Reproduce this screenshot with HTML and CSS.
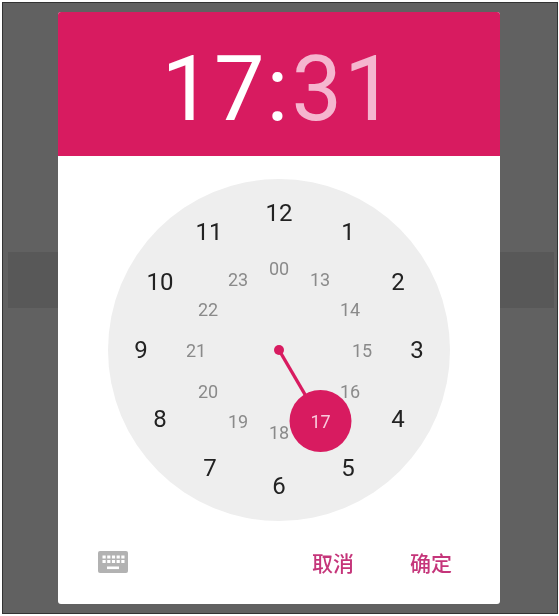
FILE: index.html
```html
<!DOCTYPE html>
<html lang="zh">
<head>
<meta charset="utf-8">
<title>Time picker</title>
<link rel="stylesheet" href="styles.css">
</head>
<body>
<div class="screen">
  <div class="band"></div>
  <div class="dialog">
    <header class="time"><span>17:</span><span class="minutes">31</span></header>
    <div class="clock">
      <svg class="dial" width="344" height="344" viewBox="-172 -172 344 344">
        <circle class="face" r="171"/>
        <line class="hand" x1="0" y1="0" x2="41.5" y2="71"/>
        <circle class="pin" r="5"/>
        <circle class="pin" cx="41.5" cy="71" r="31"/>
        <g class="outer">
          <text x="0" y="-137">12</text><text x="69" y="-118">1</text><text x="119" y="-68">2</text>
          <text x="138" y="0">3</text><text x="119" y="69">4</text><text x="69" y="118">5</text>
          <text x="0" y="136">6</text><text x="-69" y="118">7</text><text x="-119" y="69">8</text>
          <text x="-138" y="0">9</text><text x="-119" y="-68">10</text><text x="-70" y="-118">11</text>
        </g>
        <g class="inner">
          <text x="0" y="-82">00</text><text x="41" y="-71">13</text><text x="71" y="-41">14</text>
          <text x="83" y="0">15</text><text x="71" y="41">16</text><text class="selected" x="41.5" y="71">17</text>
          <text x="0" y="82">18</text><text x="-41" y="71">19</text><text x="-71" y="41">20</text>
          <text x="-83" y="0">21</text><text x="-71" y="-41">22</text><text x="-41" y="-71">23</text>
        </g>
      </svg>
    </div>
    <footer class="actions">
      <svg class="keyboard" width="30" height="22" viewBox="0 0 30 22">
        <rect class="kb-body" width="30" height="22" rx="2"/>
        <g class="kb-keys">
          <rect x="4.5" y="4.5" width="3.2" height="3"/><rect x="9.2" y="4.5" width="3.2" height="3"/><rect x="13.9" y="4.5" width="3.2" height="3"/><rect x="18.6" y="4.5" width="3.2" height="3"/><rect x="23.3" y="4.5" width="3.2" height="3"/>
          <rect x="4.5" y="9" width="3.2" height="3"/><rect x="9.2" y="9" width="3.2" height="3"/><rect x="13.9" y="9" width="3.2" height="3"/><rect x="18.6" y="9" width="3.2" height="3"/><rect x="23.3" y="9" width="3.2" height="3"/>
          <rect x="9" y="15.5" width="12" height="2.6"/>
        </g>
      </svg>
      <button class="action">取消</button>
      <button class="action">确定</button>
    </footer>
  </div>
</div>
</body>
</html>
```
FILE: styles.css
```css
html, body {
  margin: 0;
  padding: 0;
  background: #fff;
}
body {
  width: 559px;
  height: 616px;
  overflow: hidden;
  font-family: Roboto, "Noto Sans CJK SC", sans-serif;
}
.screen {
  position: relative;
  box-sizing: border-box;
  width: 556px;
  height: 612px;
  margin: 2px 0 0 2px;
  padding: 9px 57px 8px 55px;
  background: #616161;
  border: 1px solid #333;
  filter: blur(0.7px);
}
.band {
  position: absolute;
  left: 5px;
  right: 3px;
  top: 249px;
  height: 56px;
  background: #585858;
}
.dialog {
  position: relative;
  height: 592px;
  display: flex;
  flex-direction: column;
  background: #fff;
  border-radius: 3px;
  overflow: hidden;
}
.time {
  flex: 0 0 144px;
  box-sizing: border-box;
  padding-top: 11px;
  display: flex;
  justify-content: center;
  align-items: center;
  gap: 1px;
  background: #d81b60;
  color: #fff;
  font-size: 90px;
  font-weight: 400;
  letter-spacing: 2px;
  line-height: 1;
}
.minutes {
  color: #f5b6cf;
}
.clock {
  display: flex;
  justify-content: center;
  padding-top: 22px;
}
.dial {
  display: block;
}
.face {
  fill: #eeeeee;
}
.hand {
  stroke: #d81b60;
  stroke-width: 3.4;
}
.pin {
  fill: #d81b60;
}
.dial text {
  text-anchor: middle;
  dominant-baseline: central;
  font-family: Roboto, sans-serif;
}
.outer {
  font-size: 24px;
  fill: #222;
}
.inner {
  font-size: 18px;
  fill: #8a8a8a;
}
.inner .selected {
  fill: #f9c9dc;
}
.actions {
  flex: 1;
  display: flex;
  align-items: center;
  padding: 0 48px 0 40px;
  margin-top: -2px;
}
.keyboard {
  margin-right: auto;
}
.kb-body {
  fill: #b2b2b2;
}
.kb-keys rect {
  fill: #fff;
}
.action {
  border: 0;
  padding: 0;
  margin-left: 56px;
  background: none;
  color: #c5357a;
  font-family: "Noto Sans CJK SC", sans-serif;
  font-size: 21px;
  font-weight: 500;
  line-height: 1;
}
```
